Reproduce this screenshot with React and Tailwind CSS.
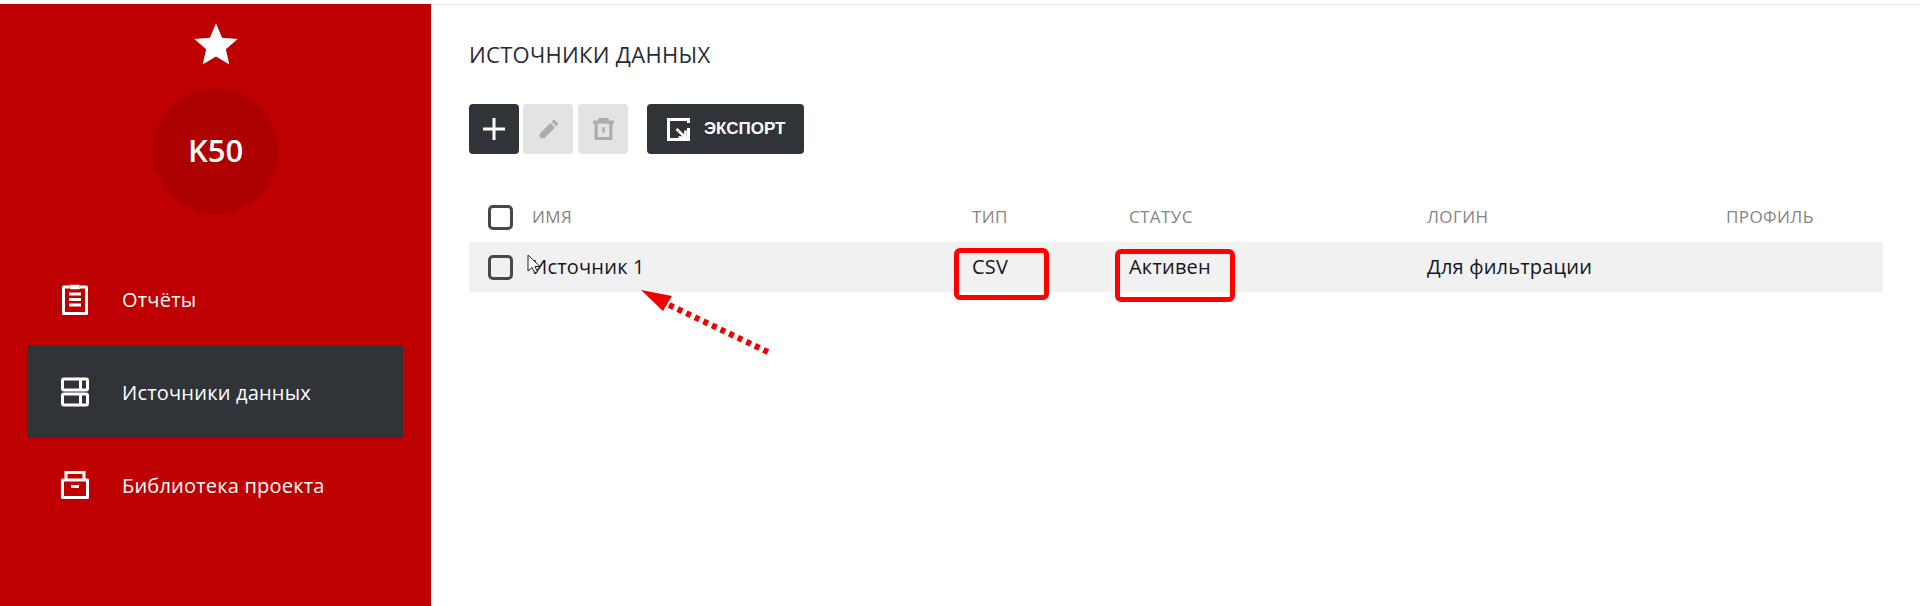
import React from "react";

const Star = () => (
  <svg viewBox="0 0 24 24" className="w-[52px] h-[52px]" fill="#fff">
    <path d="M12 17.27L18.18 21l-1.64-7.03L22 9.24l-7.19-.61L12 2 9.19 8.63 2 9.24l5.46 4.73L5.82 21z" />
  </svg>
);

const ReportIcon = () => (
  <svg viewBox="0 0 28 32" className="w-[28px] h-[32px]" fill="none" stroke="#fff">
    <path d="M9 4H2.5V30.5H25.5V4H19" strokeWidth="3" strokeLinejoin="round" />
    <path d="M10 2.5H18V5.5H10z" fill="#fff" strokeWidth="1.5" />
    <path d="M8 11H20M8 16.5H20M8 22H20" strokeWidth="2.8" />
  </svg>
);

const SourcesIcon = () => (
  <svg viewBox="0 0 28 30" className="w-[28px] h-[30px]" fill="none" stroke="#fff" strokeWidth="3">
    <rect x="1.5" y="2" width="25" height="11" rx="1.5" />
    <rect x="1.5" y="17" width="25" height="11" rx="1.5" />
    <path d="M19.5 2V12.5M19.5 17.5V28" />
  </svg>
);

const LibraryIcon = () => (
  <svg viewBox="0 0 28 28" className="w-[28px] h-[28px]" fill="none" stroke="#fff" strokeWidth="3">
    <path d="M1.5 9H26.5V26.5H1.5z" strokeLinejoin="round" />
    <path d="M5 8.5V1.6H23V8.5" />
    <path d="M10 15.5H18" />
  </svg>
);

const PlusIcon = () => (
  <svg viewBox="0 0 24 24" className="w-[24px] h-[24px]" fill="none" stroke="#fff" strokeWidth="3">
    <path d="M12 1V23M1 12H23" />
  </svg>
);

const EditIcon = () => (
  <svg viewBox="0 0 24 24" className="w-[21px] h-[21px]" fill="#acacac">
    <path d="M2 22v-5.2L14.2 4.6l5.2 5.2L7.2 22zM15.6 3.2l2-2a1 1 0 0 1 1.4 0l3.8 3.8a1 1 0 0 1 0 1.4l-2 2z" />
  </svg>
);

const TrashIcon = () => (
  <svg viewBox="0 0 24 24" className="w-[23px] h-[22px]" fill="none" stroke="#acacac" strokeWidth="3.4">
    <path d="M0.5 4.5H23.5" />
    <path d="M8 4V1.7H16V4" />
    <path d="M4 4.5V22.3H20V4.5" />
    <path d="M12 10V16" strokeWidth="2.6" />
  </svg>
);

const ExportIcon = () => (
  <svg viewBox="0 0 23 23" className="w-[23px] h-[23px]" fill="none" stroke="#fff">
    <path d="M11 1.5H1.5V21.5H21.5V10M1.5 1.5H21.5V5" strokeWidth="3" />
    <path d="M9.5 11L17.5 18.5M18.5 12.5V19.5H11.5" strokeWidth="2.6" />
  </svg>
);

const CheckBox = () => (
  <span className="block w-[25px] h-[25px] rounded-[5px] border-[3px] border-[#484848]" />
);

const NavItem = ({ icon, label, active }) => (
  <div
    className={
      "flex items-center h-[93px] mx-[28px] pl-[32px] " +
      (active ? "bg-[#303338]" : "")
    }
  >
    <span className="flex justify-center w-[30px]">{icon}</span>
    <span className="ml-[32px] pt-[2px] text-[20px] tracking-[0.2px] text-white">{label}</span>
  </div>
);

const rowGrid = "grid grid-cols-[63px_440px_157px_298px_299px_157px] items-center";

export default function App() {
  return (
    <div className="relative flex h-[606px] pt-[4px] bg-white overflow-hidden font-['Open_Sans',sans-serif]">
      <aside className="w-[431px] shrink-0 bg-[#bf0000]">
        <div className="flex justify-center pt-[15px]">
          <Star />
        </div>
        <div className="mx-auto mt-[17px] flex items-center justify-center w-[125px] h-[125px] rounded-full bg-[#ad0000] text-white text-[31px] font-semibold">
          K50
        </div>
        <nav className="mt-[39px]">
          <NavItem icon={<ReportIcon />} label="Отчёты" />
          <NavItem icon={<SourcesIcon />} label="Источники данных" active />
          <NavItem icon={<LibraryIcon />} label="Библиотека проекта" />
        </nav>
      </aside>

      <main className="flex-1 border-t border-[#e8e8e8] pl-[38px]">
        <h1 className="mt-[35px] h-[28px] leading-[28px] text-[22px] tracking-[0.3px] text-[#272b33] uppercase">
          Источники данных
        </h1>
        <div className="mt-[36px] flex">
          <button className="flex items-center justify-center w-[50px] h-[50px] rounded-[4px] bg-[#303338]">
            <PlusIcon />
          </button>
          <button className="ml-[4px] flex items-center justify-center w-[50px] h-[50px] rounded-[4px] bg-[#e3e3e3]">
            <EditIcon />
          </button>
          <button className="ml-[5px] flex items-center justify-center w-[50px] h-[50px] rounded-[4px] bg-[#e3e3e3]">
            <TrashIcon />
          </button>
          <button className="ml-[19px] flex items-center w-[157px] h-[50px] pl-[20px] rounded-[4px] bg-[#303338] text-white text-[17px] font-bold font-['Liberation_Sans',sans-serif]">
            <ExportIcon />
            <span className="ml-[14px]">ЭКСПОРТ</span>
          </button>
        </div>

        <div className="mt-[38px] w-[1414px]">
          <div className={rowGrid + " h-[50px] text-[17px] tracking-[0.4px] text-[#858585] uppercase"}>
            <span className="pl-[19px]"><CheckBox /></span>
            <span>Имя</span>
            <span>Тип</span>
            <span>Статус</span>
            <span>Логин</span>
            <span>Профиль</span>
          </div>
          <div className={rowGrid + " h-[50px] bg-[#f1f1f1] text-[20px] tracking-[0.2px] text-[#14171c]"}>
            <span className="pl-[19px]"><CheckBox /></span>
            <span>Источник 1</span>
            <span>CSV</span>
            <span>Активен</span>
            <span>Для фильтрации</span>
            <span />
          </div>
        </div>
      </main>

      {/* screenshot annotations on top of the page */}
      <div className="absolute left-[954px] top-[248px] w-[95px] h-[52px] rounded-[6px] border-[5px] border-[#ff0000]" />
      <div className="absolute left-[1115px] top-[249px] w-[120px] h-[53px] rounded-[6px] border-[5px] border-[#ff0000]" />
      <svg className="absolute left-[630px] top-[280px] w-[150px] h-[85px]" viewBox="0 0 150 85">
        <path d="M138 72L35 23" fill="none" stroke="#f00000" strokeWidth="6" strokeDasharray="5 4.5" />
        <path d="M11 10L42 16L33 31z" fill="#f00000" />
      </svg>
      <svg className="absolute left-[527px] top-[254px] w-[15px] h-[20px]" viewBox="0 0 15 20">
        <path d="M1 1V17L5 13.5L8 19L10.5 18L8 12.5H13z" fill="#fff" stroke="#222" strokeWidth="1" />
      </svg>
    </div>
  );
}
